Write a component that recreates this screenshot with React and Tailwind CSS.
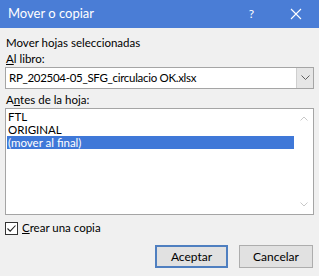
export default function App() {
  const font = { fontFamily: 'Lato, "Liberation Sans", Arial, sans-serif' };
  return (
    <div className="w-[319px] h-[276px] bg-[#f0f0f0] flex flex-col text-[11.5px] text-black overflow-hidden" style={font}>
      <div className="h-[28px] bg-[#4a7dd6] flex items-center text-white shrink-0">
        <span className="pl-[8px] text-[13px]">Mover o copiar</span>
        <span className="ml-auto mr-[36px] text-[12px] leading-none">?</span>
        <svg width="12" height="12" viewBox="0 0 12 12" className="mr-[17px]">
          <path d="M1 1 L11 11 M11 1 L1 11" stroke="white" strokeWidth="1.1" fill="none" />
        </svg>
      </div>
      <div className="flex flex-col px-[5px] pt-[7px]">
        <div className="h-[16px] leading-[16px] pl-[1px]">Mover hojas seleccionadas</div>
        <div className="h-[16px] leading-[16px] pl-[1px]"><span className="underline">A</span>l libro:</div>
        <div className="h-[22px] border border-[#a5a5a5] bg-white flex">
          <div className="flex-1 pl-[3px] leading-[20px] whitespace-nowrap overflow-hidden tracking-[-0.3px]">RP_202504-05_SFG_circulacio OK.xlsx</div>
          <div className="w-[17px] bg-[#e6e6e6] border-l border-[#cfcfcf] flex items-center justify-center">
            <svg width="9" height="6" viewBox="0 0 9 6">
              <path d="M0.5 0.5 L4.5 4.5 L8.5 0.5" stroke="#606060" strokeWidth="1" fill="none" />
            </svg>
          </div>
        </div>
        <div className="h-[16px] leading-[16px] mt-[3px] pl-[1px]">A<span className="underline">n</span>tes de la hoja:</div>
        <div className="h-[107px] border border-[#a5a5a5] bg-white flex">
          <div className="flex-1 flex flex-col pt-[1px] pl-[1px]">
            <div className="h-[13px] leading-[13px] pl-[1px]">FTL</div>
            <div className="h-[13px] leading-[13px] pl-[1px]">ORIGINAL</div>
            <div className="h-[13px] leading-[13px] pl-[1px] bg-[#3f78d8] text-white">(mover al final)</div>
          </div>
          <div className="w-[19px] flex flex-col items-center justify-between py-[7px]">
            <svg width="8" height="5" viewBox="0 0 8 5">
              <path d="M0.5 4.5 L4 1 L7.5 4.5" stroke="#c8c8c8" strokeWidth="1" fill="none" />
            </svg>
            <svg width="8" height="5" viewBox="0 0 8 5">
              <path d="M0.5 0.5 L4 4 L7.5 0.5" stroke="#c8c8c8" strokeWidth="1" fill="none" />
            </svg>
          </div>
        </div>
        <div className="h-[16px] mt-[5px] flex items-center">
          <div className="w-[13px] h-[13px] border border-[#333] bg-white flex items-center justify-center">
            <svg width="11" height="11" viewBox="0 0 11 11">
              <path d="M1.5 5.5 L4.2 8.2 L9.5 2.5" stroke="#222" strokeWidth="1.1" fill="none" />
            </svg>
          </div>
          <span className="ml-[4px]"><span className="underline">C</span>rear una copia</span>
        </div>
        <div className="flex justify-end mt-[9px] gap-[11px] pr-[1px] text-[12px]">
          <div className="w-[73px] h-[23px] border-2 border-[#4f7fc0] bg-[#e1e1e1] flex items-center justify-center">Aceptar</div>
          <div className="w-[74px] h-[23px] border border-[#adadad] bg-[#e1e1e1] flex items-center justify-center">Cancelar</div>
        </div>
      </div>
    </div>
  );
}
